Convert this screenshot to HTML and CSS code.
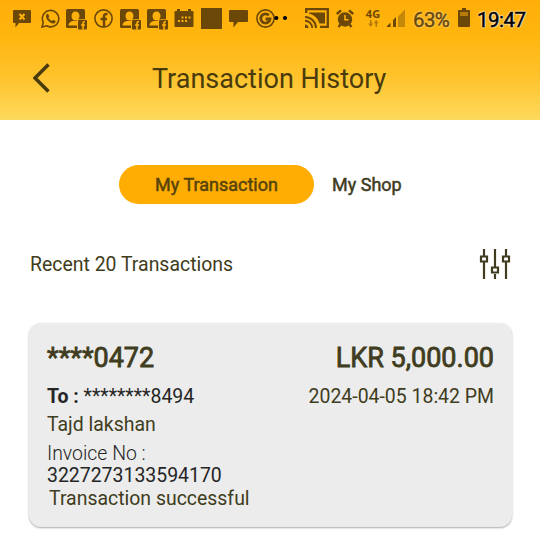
FILE: index.html
```html
<!DOCTYPE html>
<html lang="en">
<head>
<meta charset="utf-8">
<title>Transaction History</title>
<link rel="stylesheet" href="styles.css">
</head>
<body>
<svg class="defs" width="0" height="0">
  <symbol id="contact" viewBox="0 0 21 21">
    <rect width="19" height="19" rx="1.500"/>
    <g class="light"><ellipse cx="9.500" cy="7" rx="4" ry="4.600"/><path d="M2.500 16.500q0-3.500 4-4.500h6q4 1 4 4.500Z"/><rect x="11" y="10.300" width="10" height="10.700"/></g>
    <rect x="12" y="11" width="9" height="9.500" rx="1"/>
    <path class="cut" d="M19 12.800h-.8q-1.200 0-1.200 1.400v6.500M15 16h4"/>
  </symbol>
</svg>
<header class="top">
  <div class="status">
    <svg class="s1" width="18" height="19" viewBox="0 0 18 19"><path d="M1 1H17a1 1 0 0 1 1 1V13a1 1 0 0 1-1 1H6L2.500 18.500V14H1a1 1 0 0 1-1-1V2a1 1 0 0 1 1-1Z"/><path class="cut wide" d="M6.500 5l5 5.500m0-5.500l-5 5.500"/></svg>
    <svg class="s2" width="19" height="19" viewBox="0 0 19 19"><path class="line" d="M1 18l1.300-4.600A8.200 8.200 0 1 1 5.600 16.800Z"/><path d="M5.300 5.500Q6.500 4.200 7.200 5l1 2.200q.1.600-.8 1.500 1.200 2.300 3.500 3.200l1.100-1.200 2.600 1.300q.2 1.800-1.600 2.500-2.500.6-5.700-2.500T5.300 5.500Z"/></svg>
    <svg class="s3" width="21" height="21"><use href="#contact"/></svg>
    <svg class="s4" width="19" height="19" viewBox="0 0 19 19"><circle class="line" cx="9.500" cy="9.500" r="8.600"/><path class="line thick" d="M13.500 5h-1q-2.500 0-2.500 2.600V17.500M6.500 10h6.500"/></svg>
    <svg class="s5" width="21" height="21"><use href="#contact"/></svg>
    <svg class="s6" width="21" height="21"><use href="#contact"/></svg>
    <svg class="s7" width="20" height="18" viewBox="0 0 20 18"><path d="M1.500 2H3V0h3v2h8V0h3v2h1.500a1 1 0 0 1 1 1V17a1 1 0 0 1-1 1h-17a1 1 0 0 1-1-1V3a1 1 0 0 1 1-1Z"/><path class="cut dots" d="M7.500 8.500H17M4 12h10"/></svg>
    <svg class="s8" width="21" height="21"><path d="M0 0h21v21H0z"/></svg>
    <svg class="s9" width="19" height="19" viewBox="0 0 19 19"><path d="M1 1H18a1 1 0 0 1 1 1V12a1 1 0 0 1-1 1H9L4.500 18.500V13H1a1 1 0 0 1-1-1V2a1 1 0 0 1 1-1Z"/></svg>
    <svg class="s10" width="32" height="20" viewBox="0 0 32 20"><circle class="line" cx="9.500" cy="9.500" r="8.600"/><path class="line g" d="M12.800 6.300A4.600 4.600 0 1 0 14 10H9.500"/><g fill="#000"><circle cx="20.300" cy="9" r="2.100"/><circle cx="29" cy="9" r="2.100"/></g></svg>
    <svg class="s11" width="24" height="20" viewBox="0 0 24 20"><path class="line cast" d="M1.200 5V1.200H22.800V18.800H15"/><path d="M4 4.500H20V15.500H14.500Q12 7.500 4 5.500ZM0 16.500a3.500 3.500 0 0 1 3.500 3.500H0Z"/><path class="line arcs" d="M0 12.800A7.200 7.200 0 0 1 7.200 20M0 9A11 11 0 0 1 11 20"/></svg>
    <svg class="s12" width="18" height="19" viewBox="0 0 18 19"><circle cx="9" cy="10.500" r="7.200"/><path class="line alarm" d="M.8 5L5 1.300M17.200 5L13 1.300M4.500 15.500L2.500 18M13.500 15.500l2 2.500"/><path class="cut" d="M9 6v4.800h3.500"/></svg>
    <div class="net"><span>4G</span><svg width="11" height="7" viewBox="0 0 11 7"><path d="M2 0h1.500v3.500H5.200L2.700 6.800.2 3.500H2ZM7.500 6.800H9V3.300h1.700L8.200 0 5.700 3.300h1.800Z"/></svg></div>
    <svg class="s14" width="19" height="18" viewBox="0 0 19 18"><path d="M0 18v-1l3.500-3.500V18ZM6 18v-7l3-3v10Z"/><path opacity=".4" d="M11 18V7.500L18 .5V18Z"/></svg>
    <span class="pct">63%</span>
    <svg class="s15" width="12" height="19" viewBox="0 0 12 19"><path d="M4 0h4v2h3a1 1 0 0 1 1 1V18a1 1 0 0 1-1 1H1a1 1 0 0 1-1-1V3a1 1 0 0 1 1-1h3Z"/><path fill="#b77c06" d="M2 4h8v4H2z"/></svg>
    <span class="clock">19:47</span>
  </div>
  <div class="bar">
    <svg class="back" width="18" height="30" viewBox="0 0 18 30"><path d="M15.500 1.500L2 15 15.500 28.500"/></svg>
    <h1><span>Transaction History</span></h1>
  </div>
</header>
<main>
  <nav class="tabs"><a class="tab active"><span>My Transaction</span></a><a class="tab"><span>My Shop</span></a></nav>
  <div class="recent">
    <span class="label">Recent 20 Transactions</span>
    <svg class="filter" width="32" height="32" viewBox="0 0 32 32"><path d="M5 1v7m0 6v17M16 1v18m0 7v5M27 1v7m0 6v17M2 8.500h6v5H2zM13 19.500h6v5h-6zM24 8.500h6v5h-6z"/></svg>
  </div>
  <section class="card">
    <div class="row amount"><span>****0472</span><span>LKR 5,000.00</span></div>
    <div class="row to"><span><b>To :</b> <span class="stars">********8494</span></span><span class="date">2024-04-05 18:42 PM</span></div>
    <div class="name">Tajd lakshan</div>
    <div class="invoice">Invoice No :</div>
    <div class="number">3227273133594170</div>
    <div class="result">Transaction successful</div>
  </section>
</main>
</body>
</html>
```
FILE: styles.css
```css
* { box-sizing: border-box; }
body { margin: 0; height: 536px; overflow: hidden; background: #fff; color: #403c20; font-family: Roboto, "Liberation Sans", sans-serif; }
.defs { display: block; position: absolute; }
.top { height: 120px; background: linear-gradient(#ffae08 0, #ffb60f 38px, #ffb714 42px, #ffc22a 75px, #fdd95c 120px); }
.status { height: 38px; display: flex; align-items: flex-start; fill: #6b4807; color: #6b4807; white-space: nowrap; }
.status > * { flex: none; }
.line { fill: none; stroke: #6b4807; stroke-width: 1.6; }
.thick { stroke-width: 2.5; }
.g { stroke-width: 2.8; }
.cast { stroke-width: 2.3; }
.arcs { stroke-width: 1.9; }
.alarm { stroke-width: 2.4; }
.cut { fill: none; stroke: #ffb10b; stroke-width: 1.6; }
.light { fill: #ffb10b; }
.wide { stroke-width: 2; }
.dots { stroke-width: 2; stroke-dasharray: 2 1.5; }
.s1 { margin: 9px 0 0 13px; }
.s2 { margin: 9px 0 0 10px; }
.s3 { margin: 9px 0 0 6px; }
.s4 { margin: 9px 0 0 7px; }
.s5 { margin: 9px 0 0 7px; }
.s6 { margin: 9px 0 0 6px; }
.s7 { margin: 9px 0 0 6px; }
.s8 { margin: 8px 0 0 7px; }
.s9 { margin: 9px 0 0 7px; }
.s10 { margin: 9px 0 0 8px; }
.s11 { margin: 8px 0 0 17px; }
.s12 { margin: 9px 0 0 7px; }
.net { width: 16px; margin: 8px 0 0 11px; font: bold 11px/12px "Noto Sans", sans-serif; text-align: center; }
.net svg { display: block; margin: 0 auto; opacity: .55; }
.s14 { margin: 9px 0 0 6px; }
.pct { width: 37px; margin: 7px 0 0 7px; font-size: 20.500px; line-height: 26px; letter-spacing: -.6px; -webkit-text-stroke: .5px; text-shadow: 0 0 2px #ffe7a0, 0 0 2px #ffe7a0; }
.s15 { margin: 8px 0 0 8px; }
.clock { margin: 7px 0 0 7px; color: #000; font-size: 20.500px; line-height: 26px; letter-spacing: -.5px; -webkit-text-stroke: .5px; text-shadow: 0 0 2px #fff, 0 0 2px #fff, 0 0 2px #fff; }
.bar { height: 80px; display: flex; align-items: center; padding-left: 33px; }
.back { fill: none; stroke: #493b0c; stroke-width: 3.500; }
h1 { margin: 1px 0 0 101px; font-size: 27px; line-height: 34px; font-weight: 400; color: #493b0c; white-space: nowrap; }
.tabs { display: flex; margin: 45px 0 0 119px; height: 39px; font-size: 18px; font-weight: 400; -webkit-text-stroke: .5px; }
.tab { display: flex; align-items: center; padding-left: 18px; white-space: nowrap; }
.active { width: 195px; justify-content: center; padding: 0; border-radius: 20px; background: #ffad03; color: #57430c; }
.recent { display: flex; justify-content: space-between; align-items: center; height: 40px; margin: 40px 29px 0 30px; font-size: 19.450px; }
.filter { fill: none; stroke: #403c20; stroke-width: 2.2; }
.card { height: 204px; margin: 39px 28px 0 29px; padding: 18px 18px 0; border-radius: 12px; background: #ececec; box-shadow: 0 1px 2px #aaa; font-size: 19.450px; white-space: nowrap; }
.row { display: flex; justify-content: space-between; }
.amount { font-size: 27px; line-height: 34px; -webkit-text-stroke: .8px; }
.to { margin-top: 9px; line-height: 26px; }
.to > :first-child { color: #252525; }
.name { line-height: 30px; }
.invoice { color: #252525; font-weight: 300; line-height: 28px; }
.number { color: #252525; line-height: 16px; }
.result { line-height: 30px; padding-left: 2px; }
```
